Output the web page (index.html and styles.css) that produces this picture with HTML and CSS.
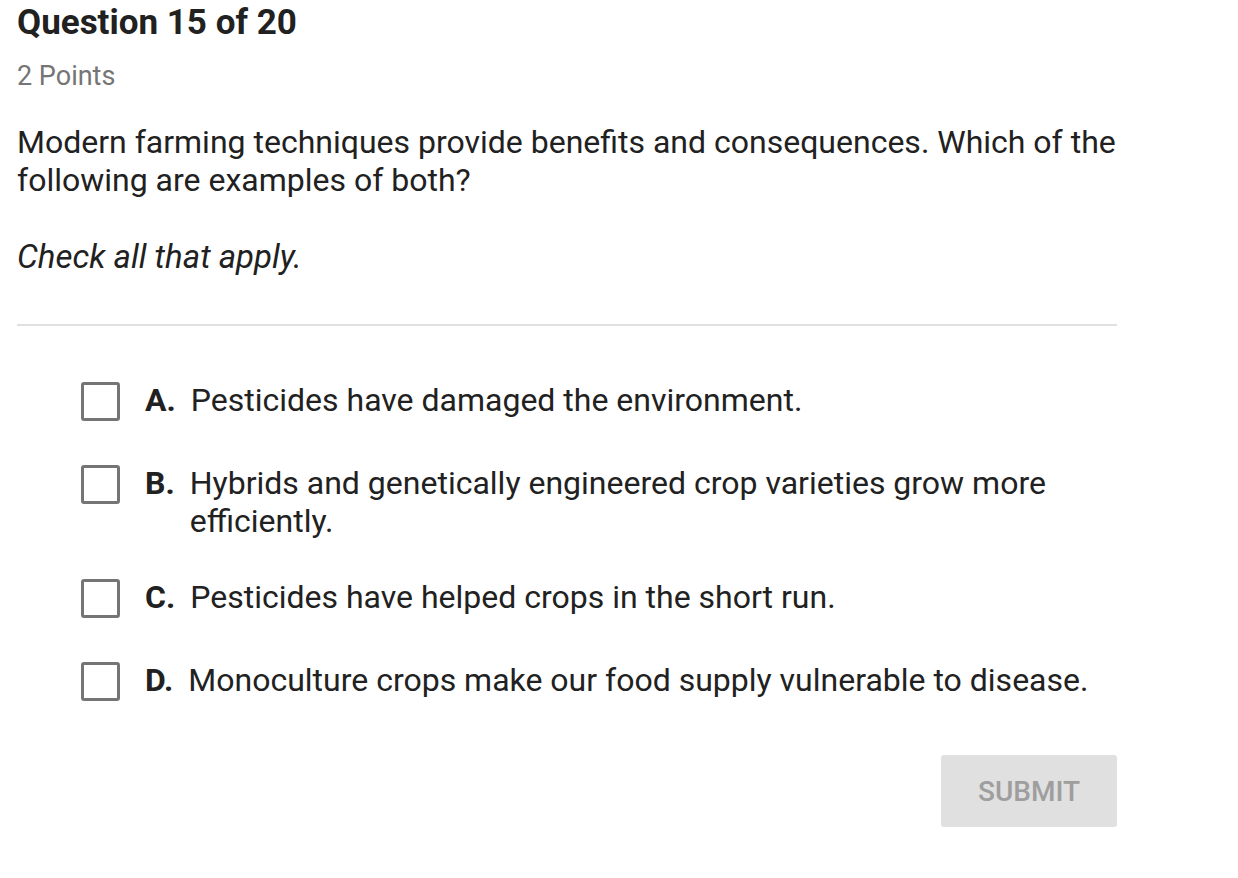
FILE: index.html
```html
<!DOCTYPE html>
<html>
<head>
<meta charset="utf-8">
<link rel="stylesheet" href="styles.css">
</head>
<body>
<div class="quiz">
  <h1 class="title">Question 15 of 20</h1>
  <div class="points">2 Points</div>
  <p class="prompt">Modern farming techniques provide benefits and consequences. Which of the following are examples of both?</p>
  <p class="hint">Check all that apply.</p>
  <div class="divider"></div>
  <div class="options">
    <div class="option"><span class="box"></span><span class="letter">A.</span><span class="text">Pesticides have damaged the environment.</span></div>
    <div class="option"><span class="box"></span><span class="letter">B.</span><span class="text">Hybrids and genetically engineered crop varieties grow more efficiently.</span></div>
    <div class="option"><span class="box"></span><span class="letter">C.</span><span class="text">Pesticides have helped crops in the short run.</span></div>
    <div class="option"><span class="box"></span><span class="letter">D.</span><span class="text">Monoculture crops make our food supply vulnerable to disease.</span></div>
  </div>
  <div class="actions"><button class="submit">SUBMIT</button></div>
</div>
</body>
</html>
```
FILE: styles.css
```css
html, body {
  margin: 0;
  padding: 0;
  background: #ffffff;
}
body {
  font-family: Roboto, "Liberation Sans", sans-serif;
  color: #212121;
}
.quiz {
  width: 1100px;
  padding-left: 17px;
  padding-top: 3px;
}
.title {
  margin: 0;
  font-size: 35px;
  font-weight: 700;
  line-height: 40px;
  color: #212121;
}
.points {
  margin-top: 19px;
  font-size: 27px;
  line-height: 28px;
  color: #757575;
}
.prompt {
  margin: 33px 0 0;
  font-size: 32px;
  line-height: 38px;
  width: 1110px;
}
.hint {
  margin: 39px 0 0;
  font-size: 33px;
  line-height: 38px;
  font-style: italic;
}
.divider {
  margin-top: 48px;
  height: 2px;
  background: #e0e0e0;
  width: 1100px;
}
.options {
  margin-top: 55px;
  padding-left: 64px;
  display: flex;
  flex-direction: column;
  gap: 38px;
}
.option {
  display: flex;
  align-items: flex-start;
  min-height: 45px;
  font-size: 32px;
  line-height: 38px;
}
.box {
  flex: none;
  width: 33px;
  height: 33px;
  border: 3px solid #757575;
  border-radius: 3px;
  margin-top: 1px;
  margin-right: 25px;
}
.letter {
  flex: none;
  font-weight: 700;
  margin-right: 15px;
}
.text {
  flex: 1;
  min-width: 0;
}
.actions {
  display: flex;
  justify-content: flex-end;
  margin-top: 49px;
}
.submit {
  width: 176px;
  height: 72px;
  border: none;
  border-radius: 3px;
  background: #e0e0e0;
  color: #9e9e9e;
  font-family: Roboto, "Liberation Sans", sans-serif;
  font-size: 28px;
  font-weight: 500;
  padding: 0;
}
```
